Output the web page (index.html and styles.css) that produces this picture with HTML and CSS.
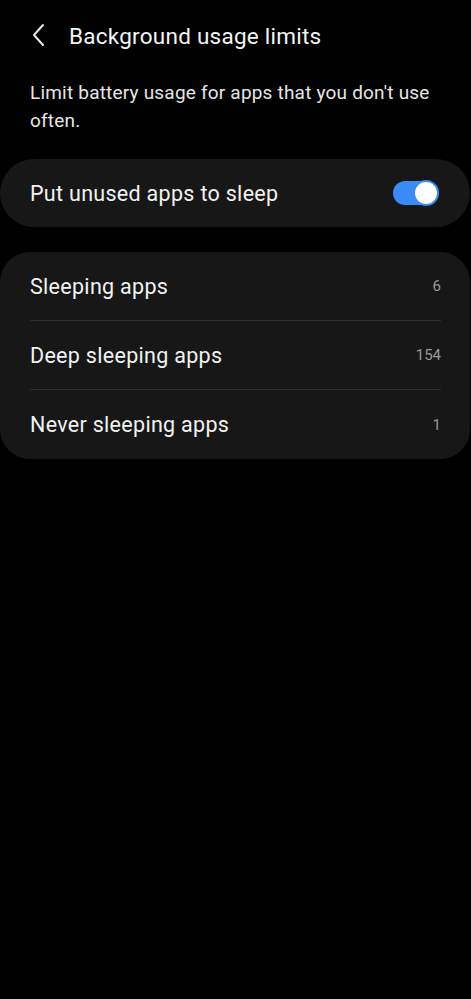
FILE: index.html
```html
<!DOCTYPE html>
<html>
<head>
<meta charset="utf-8">
<link rel="stylesheet" href="styles.css">
</head>
<body>
<div class="page">
  <header class="topbar">
    <svg class="back" width="14" height="24" viewBox="0 0 14 24"><path d="M12 2 L3 12 L12 22" fill="none" stroke="#e8e8e8" stroke-width="2" stroke-linecap="round" stroke-linejoin="round"/></svg>
    <h1 class="title">Background usage limits</h1>
  </header>
  <p class="desc">Limit battery usage for apps that you don't use often.</p>
  <div class="card card-toggle">
    <span class="label">Put unused apps to sleep</span>
    <span class="switch"><span class="thumb"></span></span>
  </div>
  <div class="card card-list">
    <div class="row"><span class="label">Sleeping apps</span><span class="count">6</span></div>
    <div class="row"><span class="label">Deep sleeping apps</span><span class="count">154</span></div>
    <div class="row"><span class="label">Never sleeping apps</span><span class="count">1</span></div>
  </div>
</div>
</body>
</html>
```
FILE: styles.css
```css
html, body {
  margin: 0;
  padding: 0;
  background: #000;
  height: 100%;
}
body {
  font-family: Roboto, "Noto Sans", sans-serif;
  color: #f2f2f2;
}
.page {
  display: flex;
  flex-direction: column;
}
.topbar {
  display: flex;
  align-items: center;
  height: 71px;
  padding-left: 31px;
  box-sizing: border-box;
}
.back {
  display: block;
  margin-top: -1px;
}
.title {
  margin: 0 0 0 24px;
  font-size: 22.5px;
  font-weight: 400;
  color: #f4f4f4;
  letter-spacing: 0.25px;
}
.desc {
  margin: 8px 30px 0 30px;
  font-size: 19px;
  line-height: 28px;
  letter-spacing: 0.2px;
  color: #e6e6e6;
}
.card {
  background: #171717;
  border-radius: 34px;
  margin: 0 1px 0 0;
}
.card-toggle {
  margin-top: 24px;
  height: 68px;
  display: flex;
  align-items: center;
  justify-content: space-between;
  padding: 0 32px 0 30px;
}
.label {
  font-size: 21.5px;
  letter-spacing: 0.3px;
  color: #f2f2f2;
}
.switch {
  position: relative;
  width: 45px;
  height: 24px;
  border-radius: 12px;
  background: #3a8bf5;
  display: block;
}
.thumb {
  position: absolute;
  right: -1px;
  top: -1px;
  width: 22px;
  height: 22px;
  border-radius: 50%;
  background: #fff;
  border: 2px solid #3a8bf5;
}
.card-list {
  margin-top: 25px;
  border-radius: 30px;
  padding: 0 29px 0 30px;
}
.row {
  height: 69px;
  display: flex;
  align-items: center;
  justify-content: space-between;
  border-bottom: 1px solid #2e2e2e;
  box-sizing: border-box;
}
.row:last-child {
  border-bottom: none;
}
.count {
  font-size: 15px;
  color: #9a9a9a;
}
```
